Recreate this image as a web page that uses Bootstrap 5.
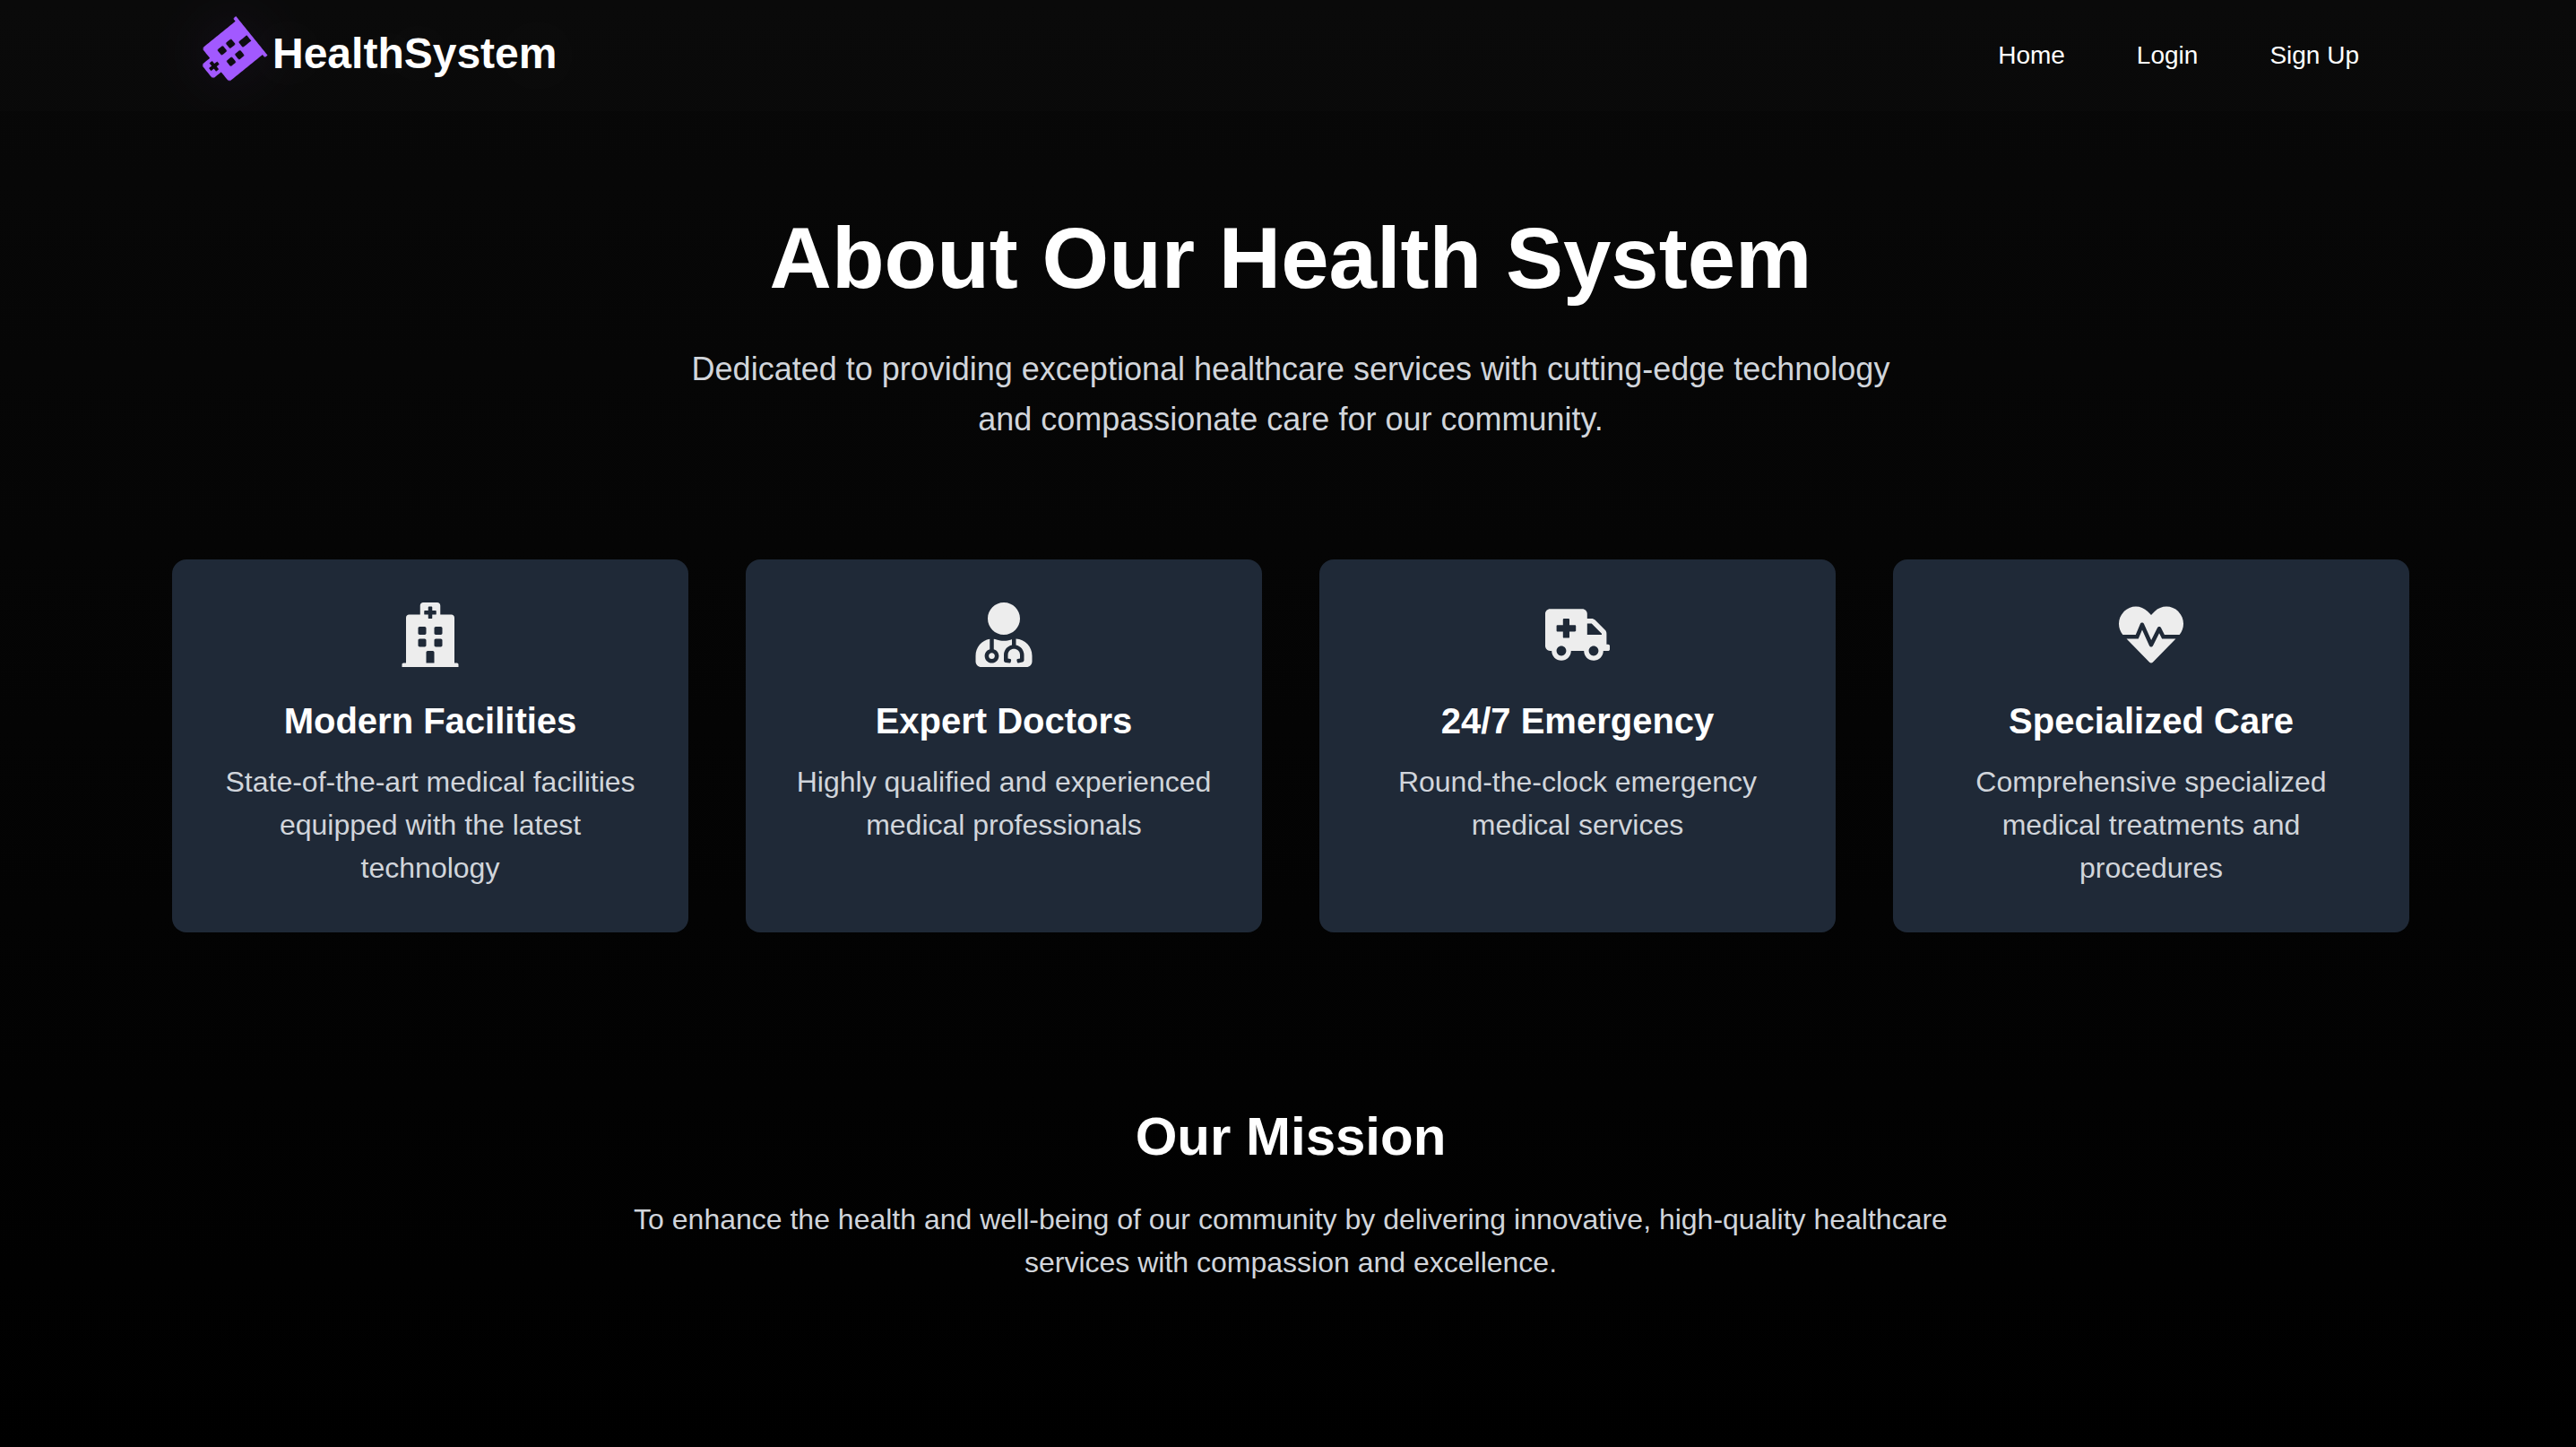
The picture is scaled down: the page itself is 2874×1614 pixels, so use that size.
<!DOCTYPE html>
<html lang="en">
<head>
<meta charset="utf-8">
<meta name="viewport" content="width=device-width, initial-scale=1">
<title>HealthSystem - About</title>
<link href="https://cdn.jsdelivr.net/npm/bootstrap@5.3.0/dist/css/bootstrap.min.css" rel="stylesheet">
<style>
  body {
    min-height: 100vh;
    background: linear-gradient(to bottom, #080808, #000) no-repeat #000;
    color: #d1d5db;
    font-family: "Liberation Sans", Arial, sans-serif;
    font-size: 32px;
    line-height: 48px;
  }
  .page-gutter { padding-left: 192px; padding-right: 186px; }
  .site-nav { padding-top: 28px; padding-bottom: 32px; background: rgba(255, 255, 255, .01); overflow: hidden; }
  .nav-inner { padding-left: 32px; padding-right: 56px; }
  .brand-link { gap: 16px; font-size: 48px; line-height: 64px; text-shadow: 0 0 80px rgba(255, 255, 255, .2); }
  .brand-logo { width: 64px; height: 64px; fill: #a259ff; transform: rotate(-129deg); filter: drop-shadow(0 0 30px rgba(162, 89, 255, .1)); }
  .menu-links { gap: 80px; padding-top: 4px; font-size: 28px; line-height: 60px; }
  .menu-links .nav-link { color: #fff; text-shadow: 0 0 60px rgba(255, 255, 255, .1); }
  .hero-block { padding-top: 116px; margin-bottom: 128px; }
  .hero-block h1 { font-size: 96px; line-height: 96px; margin-bottom: 48px; }
  .hero-text { max-width: 1344px; font-size: 36px; line-height: 56px; }
  .feature-row { --bs-gutter-x: 64px; --bs-gutter-y: 64px; }
  .feature-card { background: #1f2937; border-radius: 16px; padding: 48px; }
  .feature-card svg { width: 72px; height: 72px; fill: #ededed; margin-bottom: 32px; }
  .feature-card h2 { font-size: 40px; line-height: 56px; margin-bottom: 16px; }
  .mission-block { padding-top: 192px; padding-bottom: 192px; }
  .mission-block h2 { font-size: 60px; line-height: 72px; margin-bottom: 32px; }
  .mission-text { max-width: 1536px; }
</style>
<script src="https://cdn.jsdelivr.net/npm/bootstrap@5.3.0/dist/js/bootstrap.bundle.min.js" defer></script>
</head>
<body>
<svg class="d-none" aria-hidden="true">
  <symbol id="hospital" viewBox="0 0 448 512"><path d="M448 492v20H0v-20c0-6.627 5.373-12 12-12h20V120c0-13.255 10.745-24 24-24h88V24c0-13.255 10.745-24 24-24h112c13.255 0 24 10.745 24 24v72h88c13.255 0 24 10.745 24 24v360h20c6.627 0 12 5.373 12 12zM308 192h-40c-6.627 0-12 5.373-12 12v40c0 6.627 5.373 12 12 12h40c6.627 0 12-5.373 12-12v-40c0-6.627-5.373-12-12-12zm-168 64h40c6.627 0 12-5.373 12-12v-40c0-6.627-5.373-12-12-12h-40c-6.627 0-12 5.373-12 12v40c0 6.627 5.373 12 12 12zm104 128h-40c-6.627 0-12 5.373-12 12v84h64v-84c0-6.627-5.373-12-12-12zm64-96h-40c-6.627 0-12 5.373-12 12v40c0 6.627 5.373 12 12 12h40c6.627 0 12-5.373 12-12v-40c0-6.627-5.373-12-12-12zm-116 12c0-6.627-5.373-12-12-12h-40c-6.627 0-12 5.373-12 12v40c0 6.627 5.373 12 12 12h40c6.627 0 12-5.373 12-12v-40zM182 96h26v26a6 6 0 0 0 6 6h20a6 6 0 0 0 6-6V96h26a6 6 0 0 0 6-6V70a6 6 0 0 0-6-6h-26V38a6 6 0 0 0-6-6h-20a6 6 0 0 0-6 6v26h-26a6 6 0 0 0-6 6v20a6 6 0 0 0 6 6z"/></symbol>
</svg>

<nav class="site-nav page-gutter">
  <div class="nav-inner d-flex flex-wrap align-items-center justify-content-between">
    <a class="brand-link d-flex align-items-center fw-bold text-white text-decoration-none" href="#">
      <svg class="brand-logo" aria-hidden="true"><use href="#hospital"/></svg>
      <span>HealthSystem</span>
    </a>
    <ul class="menu-links nav">
      <li class="nav-item"><a class="nav-link p-0" href="#">Home</a></li>
      <li class="nav-item"><a class="nav-link p-0" href="#">Login</a></li>
      <li class="nav-item"><a class="nav-link p-0" href="#">Sign Up</a></li>
    </ul>
  </div>
</nav>

<main class="page-gutter text-center">
  <header class="hero-block">
    <h1 class="fw-bold text-white">About Our Health System</h1>
    <p class="hero-text mx-auto mb-0">Dedicated to providing exceptional healthcare services with cutting-edge technology and compassionate care for our community.</p>
  </header>

  <section class="feature-row row row-cols-1 row-cols-md-2 row-cols-xl-4 gy-0">
    <div class="col">
      <article class="feature-card h-100">
        <svg aria-hidden="true"><use href="#hospital"/></svg>
        <h2 class="fw-bold text-white">Modern Facilities</h2>
        <p class="mb-0">State-of-the-art medical facilities equipped with the latest technology</p>
      </article>
    </div>
    <div class="col">
      <article class="feature-card h-100">
        <svg viewBox="0 0 448 512" aria-hidden="true"><path d="M224 256c70.7 0 128-57.3 128-128S294.7 0 224 0 96 57.3 96 128s57.3 128 128 128zM104 424c0 13.3 10.7 24 24 24s24-10.7 24-24-10.7-24-24-24-24 10.7-24 24zm216-135.4v49c36.5 7.4 64 39.8 64 78.4v41.7c0 7.6-5.4 14.2-12.9 15.7l-32.2 6.4c-4.3.9-8.5-1.9-9.4-6.3l-3.1-15.7c-.9-4.3 1.9-8.6 6.3-9.4l19.3-3.9V416c0-62.8-96-65.1-96 1.9v26.7l19.3 3.9c4.3.9 7.1 5.1 6.3 9.4l-3.1 15.7c-.9 4.3-5.1 7.1-9.4 6.3l-31.2-4.2c-7.9-1.1-13.8-7.8-13.8-15.9V416c0-38.6 27.5-70.9 64-78.4v-45.2c-2.2.7-4.4 1.1-6.6 1.9-18 6.3-37.3 9.8-57.4 9.8s-39.4-3.5-57.4-9.8c-7.4-2.6-14.9-4.2-22.6-5.2v81.6c23.1 6.9 40 28.1 40 53.4 0 30.9-25.1 56-56 56s-56-25.1-56-56c0-25.3 16.9-46.5 40-53.4v-80.4C48.5 301 0 355.8 0 422.4v44.8C0 491.9 20.1 512 44.8 512h358.4c24.7 0 44.8-20.1 44.8-44.8v-44.8c0-72-56.8-130.3-128-133.8z"/></svg>
        <h2 class="fw-bold text-white">Expert Doctors</h2>
        <p class="mb-0">Highly qualified and experienced medical professionals</p>
      </article>
    </div>
    <div class="col">
      <article class="feature-card h-100">
        <svg viewBox="0 0 640 512" aria-hidden="true"><path d="M624 352h-16V243.9c0-12.7-5.1-24.9-14.1-33.9L494 110.1c-9-9-21.2-14.1-33.9-14.1H416V48c0-26.5-21.5-48-48-48H48C21.5 0 0 21.5 0 48v320c0 26.5 21.5 48 48 48h16c0 53 43 96 96 96s96-43 96-96h128c0 53 43 96 96 96s96-43 96-96h48c8.8 0 16-7.2 16-16v-32c0-8.8-7.2-16-16-16zM160 464c-26.5 0-48-21.5-48-48s21.5-48 48-48 48 21.5 48 48-21.5 48-48 48zm144-248c0 4.4-3.6 8-8 8h-56v56c0 4.4-3.6 8-8 8h-48c-4.4 0-8-3.6-8-8v-56h-56c-4.4 0-8-3.6-8-8v-48c0-4.4 3.6-8 8-8h56v-56c0-4.4 3.6-8 8-8h48c4.4 0 8 3.6 8 8v56h56c4.4 0 8 3.6 8 8v48zm176 248c-26.5 0-48-21.5-48-48s21.5-48 48-48 48 21.5 48 48-21.5 48-48 48zm80-208H416V144h44.1l99.9 99.9V256z"/></svg>
        <h2 class="fw-bold text-white">24/7 Emergency</h2>
        <p class="mb-0">Round-the-clock emergency medical services</p>
      </article>
    </div>
    <div class="col">
      <article class="feature-card h-100">
        <svg viewBox="0 0 512 512" aria-hidden="true"><path d="M320.2 243.8l-49.7 99.4c-6 12.1-23.4 11.7-28.9-.6l-56.9-126.3-30 71.7H60.6l182.5 186.5c7.1 7.3 18.6 7.3 25.7 0L451.4 288H342.3l-22.1-44.2zM473.7 73.9l-2.4-2.5c-51.5-52.6-135.8-52.6-187.4 0L256 100l-27.9-28.5c-51.5-52.7-135.9-52.7-187.4 0l-2.4 2.4C-10.4 123.7-12.5 203 31 256h102.4l35.9-86.2c5.4-12.9 23.6-13.1 29.3-.4l58.2 129.3 49-97.9c5.9-11.8 22.7-11.8 28.6 0l27.6 55.2H481c43.5-53 41.4-132.3-7.3-182.1z"/></svg>
        <h2 class="fw-bold text-white">Specialized Care</h2>
        <p class="mb-0">Comprehensive specialized medical treatments and procedures</p>
      </article>
    </div>
  </section>

  <section class="mission-block">
    <h2 class="fw-bold text-white">Our Mission</h2>
    <p class="mission-text mx-auto mb-0">To enhance the health and well-being of our community by delivering innovative, high-quality healthcare services with compassion and excellence.</p>
  </section>
</main>
</body>
</html>
